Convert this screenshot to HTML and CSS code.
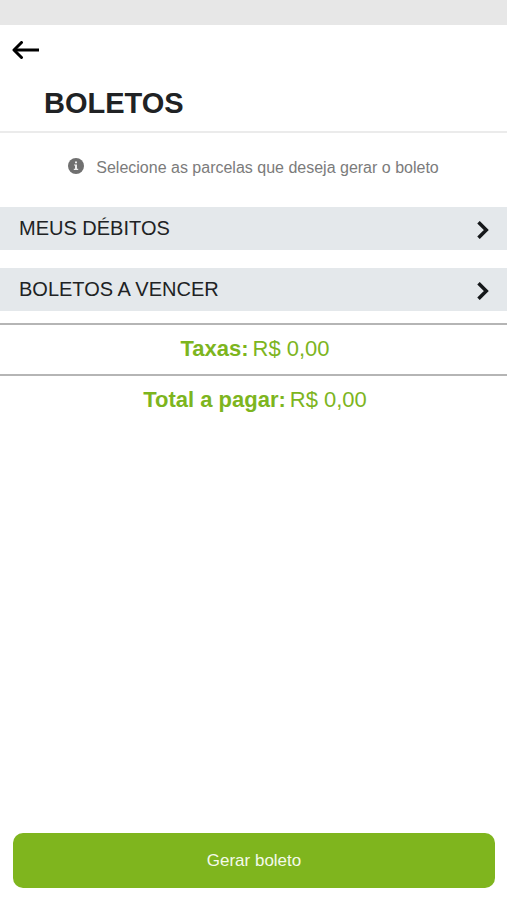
FILE: index.html
```html
<!DOCTYPE html>
<html lang="pt-BR">
<head>
<meta charset="utf-8">
<meta name="viewport" content="width=device-width, initial-scale=1">
<title>Boletos</title>
<link rel="stylesheet" href="styles.css">
</head>
<body>
<div class="status-bar"></div>
<header class="header">
  <button class="back" type="button" aria-label="Voltar">
    <svg width="28" height="18" viewBox="0 0 28 18" fill="none" stroke="#000" stroke-width="3" stroke-linecap="round" stroke-linejoin="round"><path d="M9.500 1.500 2 9l7.500 7.500"/><path d="M2.500 9H27" stroke-linecap="butt"/></svg>
  </button>
  <h1 class="title">BOLETOS</h1>
</header>
<main class="content">
  <p class="hint">
    <svg width="16" height="16" viewBox="0 0 16 16"><circle cx="8" cy="8" r="8" fill="#707070"/><path d="M7 3.600h2v1.600H7zM6 6.400h3v4.400h1.200V12H5.800v-1.200H7V7.600H6z" fill="#eee"/></svg>
    <span>Selecione as parcelas que deseja gerar o boleto</span>
  </p>
  <div class="groups">
    <button class="group" type="button">
      <span>MEUS DÉBITOS</span>
      <svg width="12" height="18" viewBox="0 0 12 18" fill="none" stroke="#15181a" stroke-width="3.500"><path d="M1.500 1.200 9.300 9l-7.800 7.800"/></svg>
    </button>
    <button class="group" type="button">
      <span>BOLETOS A VENCER</span>
      <svg width="12" height="18" viewBox="0 0 12 18" fill="none" stroke="#15181a" stroke-width="3.500"><path d="M1.500 1.200 9.300 9l-7.800 7.800"/></svg>
    </button>
  </div>
  <dl class="totals">
    <div class="total"><dt>Taxas:</dt><dd>R$ 0,00</dd></div>
    <div class="total"><dt>Total a pagar:</dt><dd>R$ 0,00</dd></div>
  </dl>
</main>
<footer class="footer">
  <button class="submit" type="button">Gerar boleto</button>
</footer>
</body>
</html>
```
FILE: styles.css
```css
* {
  box-sizing: border-box;
}

body {
  margin: 0;
  min-height: 100vh;
  display: flex;
  flex-direction: column;
  background: #fff;
  color: #202224;
  font-family: "Liberation Sans", Arial, sans-serif;
}

button {
  border: 0;
  font: inherit;
  color: inherit;
  cursor: pointer;
}

svg {
  display: block;
  flex: none;
}

.status-bar {
  height: 25px;
  background: #e7e7e7;
}

.header {
  padding: 16px 12px 12px;
  border-bottom: 2px solid #ebebeb;
}

.back {
  display: block;
  padding: 0;
  background: none;
}

.title {
  margin: 28px 32px 0;
  font-size: 29px;
  line-height: 32px;
}

.content {
  flex: 1;
}

.hint {
  display: flex;
  justify-content: center;
  gap: 12px;
  margin: 25px 0 29px;
  font-size: 16px;
  line-height: 20px;
  color: #7b7b7b;
}

.groups {
  display: grid;
  gap: 18px;
}

.group {
  display: flex;
  align-items: center;
  justify-content: space-between;
  width: 100%;
  height: 43px;
  padding: 0 18px 0 19px;
  background: #e4e8eb;
  font-size: 20px;
}

.group svg {
  margin-top: 3px;
}

.totals {
  margin: 12px 0 0;
}

.total {
  display: flex;
  justify-content: center;
  gap: 4px;
  padding: 11px 0 12px 3px;
  border-top: 2px solid #b5b5b5;
  font-size: 22px;
  line-height: 26px;
  color: #7db51e;
}

.total dt {
  font-weight: bold;
}

.total dd {
  margin: 0;
}

.footer {
  padding: 12px 12px 12px 13px;
}

.submit {
  display: block;
  width: 100%;
  height: 55px;
  border-radius: 10px;
  background: #7fb51e;
  color: #f4faea;
  font-size: 17px;
}
```
